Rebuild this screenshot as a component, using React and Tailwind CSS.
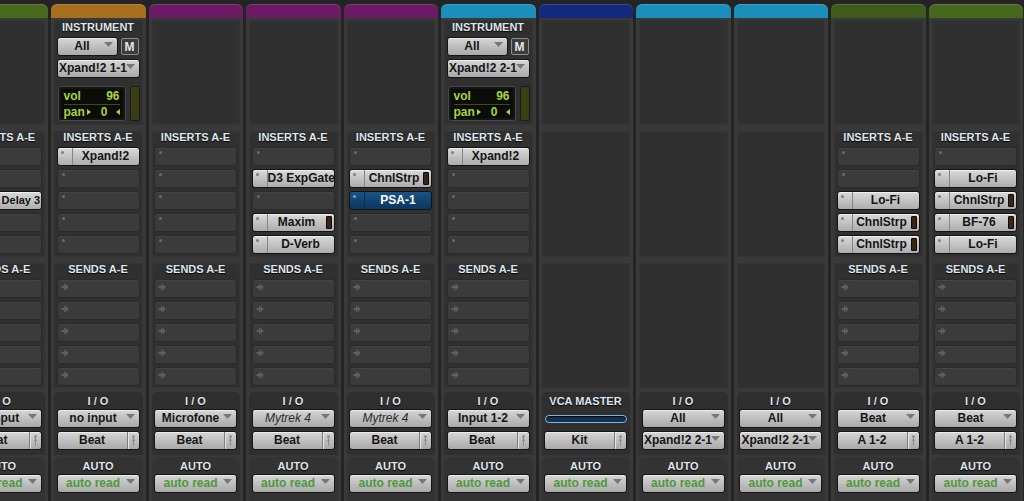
import React from "react";

const COLS = [
  { color: "bg-[#48691c]", inserts: [null, null, { n: "Mod Delay 3", small: true }, null, null], io: [{ t: "no input", dd: true }, { t: "Beat" }] },
  { color: "bg-[#a66f1d]", top: "Xpand!2 1-1", inserts: [{ n: "Xpand!2" }, null, null, null, null], io: [{ t: "no input", dd: true }, { t: "Beat" }] },
  { color: "bg-[#6a1b63]", inserts: [null, null, null, null, null], io: [{ t: "Microfone", dd: true }, { t: "Beat" }] },
  { color: "bg-[#6a1b63]", inserts: [null, { n: "D3 ExpGate" }, null, { n: "Maxim", ind: true }, { n: "D-Verb" }], io: [{ t: "Mytrek 4", dd: true, dim: true }, { t: "Beat" }] },
  { color: "bg-[#6a1b63]", inserts: [null, { n: "ChnlStrp", ind: true }, { n: "PSA-1", sel: true }, null, null], io: [{ t: "Mytrek 4", dd: true, dim: true }, { t: "Beat" }] },
  { color: "bg-[#1b8fbb]", top: "Xpand!2 2-1", inserts: [{ n: "Xpand!2" }, null, null, null, null], io: [{ t: "Input 1-2", dd: true }, { t: "Beat" }] },
  { color: "bg-[#13297d]", empty: true, vca: true },
  { color: "bg-[#1b8fbb]", empty: true, io: [{ t: "All", dd: true }, { t: "Xpand!2 2-1", dd: true }] },
  { color: "bg-[#1b8fbb]", empty: true, io: [{ t: "All", dd: true }, { t: "Xpand!2 2-1", dd: true }] },
  { color: "bg-[#3f5b1c]", inserts: [null, null, { n: "Lo-Fi" }, { n: "ChnlStrp", ind: true }, { n: "ChnlStrp", ind: true }], io: [{ t: "Beat", dd: true }, { t: "A 1-2" }] },
  { color: "bg-[#46671c]", inserts: [null, { n: "Lo-Fi" }, { n: "ChnlStrp", ind: true }, { n: "BF-76", ind: true }, { n: "Lo-Fi" }], io: [{ t: "Beat", dd: true }, { t: "A 1-2" }] },
];

const HEAD = "text-center text-[11px] font-bold text-[#dfe5ec] [text-shadow:0_1px_1px_#000] whitespace-nowrap";
const BTN = "relative h-[19px] rounded-[3px] border border-[#151515] bg-linear-to-b from-[#d6d6d6] to-[#a9a9a9] shadow-[inset_0_1px_0_rgba(255,255,255,0.55)] text-[12px] font-bold leading-[17px] text-[#161616] whitespace-nowrap overflow-hidden";

function Tri() {
  return (
    <svg className="absolute right-[4px] top-[4px]" width="9" height="5" viewBox="0 0 9 5">
      <path d="M0 0H9L4.5 5Z" fill="#777" />
    </svg>
  );
}

function Dropdown({ t, dim, w = "w-[83px]", green }) {
  return (
    <div className={`${BTN} ${w} ${dim ? "from-[#7a7a7a] to-[#626262]" : ""}`}>
      <div className={`pr-[10px] text-center ${dim ? "italic font-normal text-[#2b2b2b]" : ""} ${green ? "text-[#4c9a3a]" : ""}`}>{t}</div>
      <Tri />
    </div>
  );
}

function PinButton({ t }) {
  return (
    <div className={`${BTN} w-[83px] flex`}>
      <div className="flex-1 text-center">{t}</div>
      <div className="w-px bg-[#7c7c7c] shadow-[1px_0_0_#e6e6e6]" />
      <div className="w-[11px] flex items-center justify-center">
        <svg width="5" height="11" viewBox="0 0 5 11">
          <circle cx="2.5" cy="1.6" r="1.4" fill="#8a8a8a" />
          <path d="M2.5 3V10.5M0.8 5.2H4.2" stroke="#8a8a8a" strokeWidth="1.1" />
        </svg>
      </div>
    </div>
  );
}

function InsertSlot({ s }) {
  if (!s) {
    return (
      <div className="relative h-[19px] w-[83px] rounded-[3px] border border-[#2a2a2a] bg-[#3b3b3b] shadow-[inset_0_1px_0_#444]">
        <span className="absolute left-[4px] top-[3px] h-[3px] w-[3px] rounded-full bg-[#6a6a6a]" />
      </div>
    );
  }
  const sel = s.sel;
  return (
    <div
      className={`flex h-[19px] w-[83px] rounded-[3px] border border-[#141414] ${
        sel ? "bg-linear-to-b from-[#185487] to-[#0c3660]" : "bg-linear-to-b from-[#dadada] to-[#adadad] shadow-[inset_0_1px_0_rgba(255,255,255,0.6)]"
      }`}
    >
      <div className={`relative w-[15px] shrink-0 border-r ${sel ? "border-[#0a2a4a]" : "border-[#858585]"}`}>
        <span className={`absolute left-[3px] top-[3px] h-[3px] w-[3px] rounded-full ${sel ? "bg-[#6fa6d6]" : "bg-[#7f7f7f]"}`} />
      </div>
      <div className={`flex-1 overflow-hidden whitespace-nowrap text-center font-bold leading-[17px] ${s.small ? "text-[11px]" : "text-[12px]"} ${sel ? "text-white" : "text-[#141414]"}`}>{s.n}</div>
      {s.ind && <div className="my-auto mr-[2px] h-[13px] w-[6px] shrink-0 rounded-[1px] border border-[#0c0c0c] bg-[#3a2412]" />}
    </div>
  );
}

function SendSlot() {
  return (
    <div className="relative h-[19px] w-[83px] rounded-[3px] border border-[#2a2a2a] bg-[#3b3b3b] shadow-[inset_0_1px_0_#444]">
      <svg className="absolute left-[3px] top-[3px]" width="8" height="8" viewBox="0 0 8 8">
        <path d="M0.5 3H3V0.8H4.4V3H5V1L7.8 4L5 7V5H4.4V7.2H3V5H0.5Z" fill="#5f5f5f" />
      </svg>
    </div>
  );
}

function Box({ className = "", children }) {
  return <div className={`rounded-[2px] bg-[#303030] shadow-[inset_0_0_0_1px_#343434] ${className}`}>{children}</div>;
}

function Instrument({ name }) {
  return (
    <div className="pl-[2.5px]">
      <div className={`${HEAD} h-[14px] leading-[14px] pr-[3px]`}>INSTRUMENT</div>
      <div className="mt-[3px] flex gap-[3px]">
        <Dropdown t="All" w="w-[61px]" />
        <div className="mt-[1px] flex h-[17px] w-[18px] items-center justify-center rounded-[2px] border border-[#8c8c8c] bg-[#3c3c3c] text-[12px] font-bold text-[#e6e6e6]">M</div>
      </div>
      <div className="mt-[3px]">
        <Dropdown t={name} />
      </div>
      <div className="mt-[8px] flex gap-[4px] pl-[1px]">
        <div className="h-[35px] w-[68px] rounded-[3px] border border-[#474747] bg-[#151515] p-[2px]">
          <div className="h-full rounded-[2px] bg-[#0b0c07] px-[3px] text-[12px] font-bold leading-[14px] text-[#a8d43a]">
            <div className="flex justify-between border-b border-[#3c4a1a] pb-[1px]">
              <span>vol</span>
              <span>96</span>
            </div>
            <div className="flex items-center">
              <span>pan</span>
              <svg className="ml-[2px]" width="4" height="6" viewBox="0 0 4 6"><path d="M0 0L4 3L0 6Z" fill="#a8d43a" /></svg>
              <span className="ml-auto">0</span>
              <svg className="ml-[8px]" width="4" height="6" viewBox="0 0 4 6"><path d="M4 0L0 3L4 6Z" fill="#a8d43a" /></svg>
            </div>
          </div>
        </div>
        <div className="h-[35px] w-[10px] rounded-[2px] border border-[#1a1a1a] bg-[#3a3e12]" />
      </div>
    </div>
  );
}

function Strip({ c }) {
  return (
    <div className="flex w-[97.5px] shrink-0 flex-col pl-[1px] pr-[2px] pt-[4px]">
      <div className={`h-[14px] rounded-t-[6px] ${c.color} shadow-[inset_0_1px_0_rgba(255,255,255,0.15)]`} />
      <div className="flex flex-1 flex-col bg-[#393939] px-[3px] pt-[2px]">
        <Box className="h-[105px]">{c.top && <Instrument name={c.top} />}</Box>
        <Box className="mt-[6px] h-[126px]">
          {!c.empty && (
            <div className="pl-[2.5px]">
              <div className={`${HEAD} h-[16px] leading-[13px] pr-[3px]`}>INSERTS A-E</div>
              <div className="flex flex-col gap-[3px]">
                {c.inserts.map((s, i) => (
                  <InsertSlot key={i} s={s} />
                ))}
              </div>
            </div>
          )}
        </Box>
        <Box className="mt-[6px] h-[125px]">
          {!c.empty && (
            <div className="pl-[2.5px]">
              <div className={`${HEAD} h-[16px] leading-[13px] pr-[3px]`}>SENDS A-E</div>
              <div className="flex flex-col gap-[3px]">
                {[0, 1, 2, 3, 4].map((i) => (
                  <SendSlot key={i} />
                ))}
              </div>
            </div>
          )}
        </Box>
        <div className="mt-[4px] h-[63px] rounded-t-[5px] bg-[#2f2f2f] pl-[2.5px] pt-[3px]">
          <div className={`${HEAD} h-[12px] leading-[12px] pr-[3px]`}>{c.vca ? "VCA MASTER" : "I / O"}</div>
          <div className="mt-[2px] flex flex-col gap-[3px]">
            {c.vca ? (
              <>
                <div className="flex h-[19px] items-center pl-[1px]">
                  <div className="h-[8px] w-[82px] rounded-full border border-[#8fb0c8] bg-[#0c3459] shadow-[inset_0_1px_1px_#000]" />
                </div>
                <PinButton t="Kit" />
              </>
            ) : (
              c.io.map((b, i) => (b.dd ? <Dropdown key={i} t={b.t} dim={b.dim} /> : <PinButton key={i} t={b.t} />))
            )}
          </div>
        </div>
        <div className="mt-[2px] flex-1 rounded-t-[6px] bg-[#333333] pl-[2.5px] pt-[3px]">
          <div className={`${HEAD} h-[12px] leading-[12px] pr-[3px]`}>AUTO</div>
          <div className="mt-[2px]">
            <Dropdown t="auto read" green />
          </div>
        </div>
      </div>
    </div>
  );
}

export default function App() {
  return (
    <div className="h-[501px] w-[1024px] overflow-hidden bg-[#242424] font-['Liberation_Sans',Arial,sans-serif]">
      <div className="ml-[-47.5px] flex h-[501px]">
        {COLS.map((c, i) => (
          <Strip key={i} c={c} />
        ))}
      </div>
    </div>
  );
}
